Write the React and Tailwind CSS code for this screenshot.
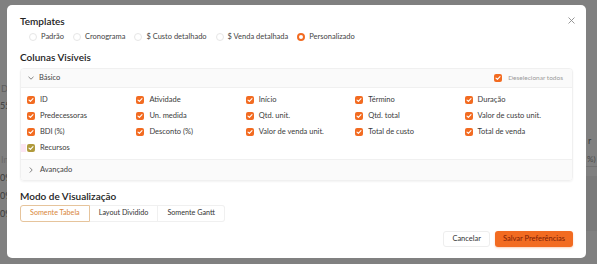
import React from "react";

const Check = ({ olive }) => (
  <span
    className={
      "w-[8px] h-[8px] rounded-[2px] flex items-center justify-center shrink-0 " +
      (olive ? "bg-[#b09a3c]" : "bg-[#f26b21]")
    }
  >
    <svg width="6" height="6" viewBox="0 0 6 6">
      <polyline points="1,3.1 2.4,4.4 5,1.6" fill="none" stroke="white" strokeWidth="1.1" strokeLinecap="round" strokeLinejoin="round" />
    </svg>
  </span>
);

const Radio = ({ label, selected }) => (
  <div className="flex items-center gap-[4px]">
    {selected ? (
      <span className="w-[8px] h-[8px] rounded-full border-[2.5px] border-[#f26b21] bg-white shrink-0" />
    ) : (
      <span className="w-[8px] h-[8px] rounded-full border border-[#e6e6e6] bg-white shrink-0" />
    )}
    <span>{label}</span>
  </div>
);

const cols = [
  "ID", "Atividade", "Início", "Término", "Duração",
  "Predecessoras", "Un. medida", "Qtd. unit.", "Qtd. total", "Valor de custo unit.",
  "BDI (%)", "Desconto (%)", "Valor de venda unit.", "Total de custo", "Total de venda",
];

export default function App() {
  return (
    <div className="relative w-[597px] h-[264px] overflow-hidden bg-[#808080] font-[Lato,sans-serif]">
      {/* background page glimpses, partly hidden by the modal */}
      <span className="absolute left-[1px] top-[82px] text-[9px] text-[#5e5e5e]">D</span>
      <span className="absolute left-[0px] top-[99px] text-[9px] text-[#3c3c3c]">55</span>
      <span className="absolute left-[1px] top-[153px] text-[9px] text-[#6a6a6a]">In</span>
      <span className="absolute left-[0px] top-[171px] text-[9px] text-[#3c3c3c]">09</span>
      <span className="absolute left-[0px] top-[189px] text-[9px] text-[#3c3c3c]">09</span>
      <span className="absolute left-[0px] top-[207px] text-[9px] text-[#3c3c3c]">09</span>
      <span className="absolute left-[588px] top-[134px] text-[9px] text-[#3c3c3c]">r</span>
      <span className="absolute left-[587px] top-[153px] text-[8px] text-[#4a4a4a]">%)</span>
      <div className="absolute left-[586px] top-[166px] w-[11px] h-[1px] bg-[#727272]" />
      <div className="absolute left-[586px] top-[176px] w-[11px] h-[55px] bg-[#7a7a7a]" />

      {/* modal */}
      <div className="absolute left-[7px] top-[5px] w-[579px] h-[253px] bg-white rounded-[5px] px-[13px] pt-[10px] text-[#3a3a3a]">
        <button className="absolute right-[11px] top-[12px] text-[#8c8c8c]">
          <svg width="7" height="7" viewBox="0 0 7 7">
            <path d="M0.5 0.5L6.5 6.5M6.5 0.5L0.5 6.5" stroke="#8c8c8c" strokeWidth="0.9" />
          </svg>
        </button>

        <div className="text-[10px] leading-[12px] font-semibold text-[#222]">Templates</div>
        <div className="mt-[5px] h-[10px] flex items-center gap-[9px] pl-[9px] text-[7.5px] text-[#444]">
          <Radio label="Padrão" />
          <Radio label="Cronograma" />
          <Radio label="$ Custo detalhado" />
          <Radio label="$ Venda detalhada" />
          <Radio label="Personalizado" selected />
        </div>

        <div className="mt-[9px] text-[10px] leading-[12px] font-semibold text-[#222]">Colunas Visíveis</div>

        <div className="mt-[5px] border border-[#f0f0f0] rounded-[4px] shadow-[0_1px_2px_rgba(0,0,0,0.05)] overflow-hidden">
          <div className="h-[19px] bg-[#fafafa] border-b border-[#f0f0f0] flex items-center pl-[7px] pr-[9px] text-[7.5px]">
            <svg width="6" height="4" viewBox="0 0 6 4" className="shrink-0">
              <polyline points="0.5,0.8 3,3.2 5.5,0.8" fill="none" stroke="#666" strokeWidth="0.8" />
            </svg>
            <span className="ml-[5px] text-[#444]">Básico</span>
            <div className="ml-auto flex items-center gap-[6px]">
              <Check />
              <span className="text-[6.5px] text-[#9a9a9a]">Deselecionar todos</span>
            </div>
          </div>

          <div className="pt-[4px] pb-[3px] px-[6px] grid grid-cols-5 gap-x-2 text-[7.5px]">
            {cols.map((c) => (
              <div key={c} className="h-[16px] flex items-center gap-[5px]">
                <Check />
                <span>{c}</span>
              </div>
            ))}
            <div className="relative h-[16px] flex items-center gap-[5px]">
              <span className="absolute left-[-11px] top-[4px] w-[10px] h-[8px] bg-[#fce6f3]" />
              <Check olive />
              <span>Recursos</span>
            </div>
          </div>

          <div className="h-[21px] bg-[#fafafa] border-t border-[#f0f0f0] flex items-center pl-[8px] text-[7.5px]">
            <svg width="4" height="6" viewBox="0 0 4 6" className="shrink-0">
              <polyline points="0.8,0.5 3.2,3 0.8,5.5" fill="none" stroke="#666" strokeWidth="0.8" />
            </svg>
            <span className="ml-[7px] text-[#444]">Avançado</span>
          </div>
        </div>

        <div className="mt-[9px] text-[10px] leading-[12px] font-semibold text-[#222]">Modo de Visualização</div>
        <div className="mt-[3px] flex text-[7.2px]">
          <button className="h-[17px] px-[9px] border border-[#e6c49c] rounded-l-[3px] text-[#d9873a] bg-white">Somente Tabela</button>
          <button className="h-[17px] px-[9px] border-y border-r border-[#f0f0f0] text-[#333] bg-white">Layout Dividido</button>
          <button className="h-[17px] px-[9px] border-y border-r border-[#f0f0f0] rounded-r-[3px] text-[#333] bg-white">Somente Gantt</button>
        </div>

        <div className="mt-[9px] flex justify-end gap-[5px] text-[7.5px]">
          <button className="h-[16px] px-[8px] border border-[#eeeeee] rounded-[3px] text-[#333] bg-white">Cancelar</button>
          <button className="h-[16px] px-[8px] rounded-[3px] bg-[#f26b21] text-[#7a1d05] shadow-[0_1px_2px_rgba(242,107,33,0.3)]">Salvar Preferências</button>
        </div>
      </div>
    </div>
  );
}
